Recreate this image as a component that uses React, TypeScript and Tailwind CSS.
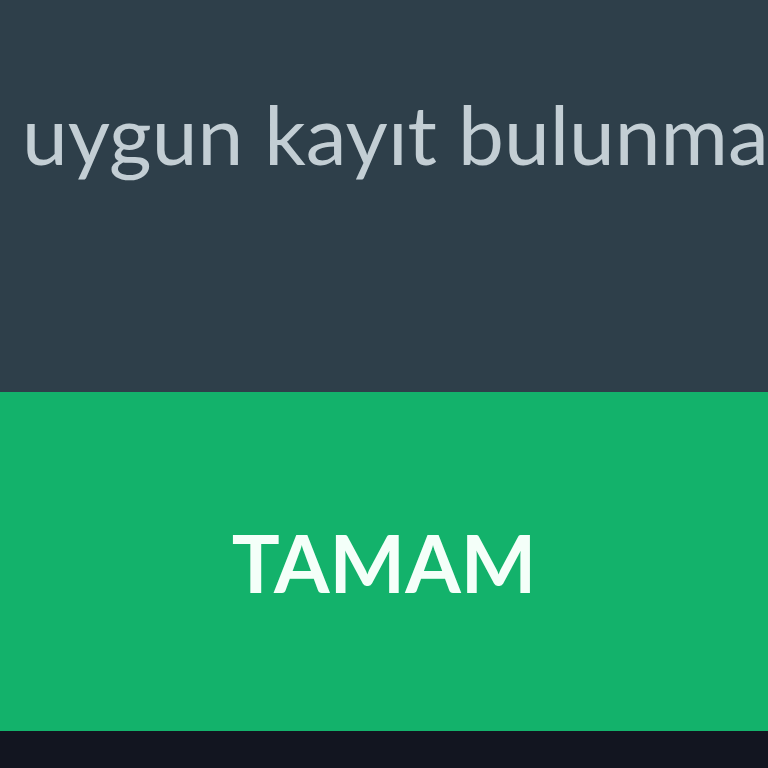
export default function App() {
  return (
    <div className="flex h-[768px] w-[768px] flex-col overflow-hidden bg-[#121520]" style={{ fontFamily: 'Lato, "Open Sans", sans-serif' }}>
      <div className="flex h-[392px] items-start bg-[#2e3f4a] pt-[83px]">
        <p className="whitespace-nowrap pl-[22px] text-[82px] leading-[100px] text-[#c3ced4]">
          uygun kayıt bulunmadı
        </p>
      </div>
      <button className="flex h-[339px] w-full items-center justify-center bg-[#13b26b] text-[80px] font-bold text-[#f4fff9]">
        TAMAM
      </button>
    </div>
  );
}
